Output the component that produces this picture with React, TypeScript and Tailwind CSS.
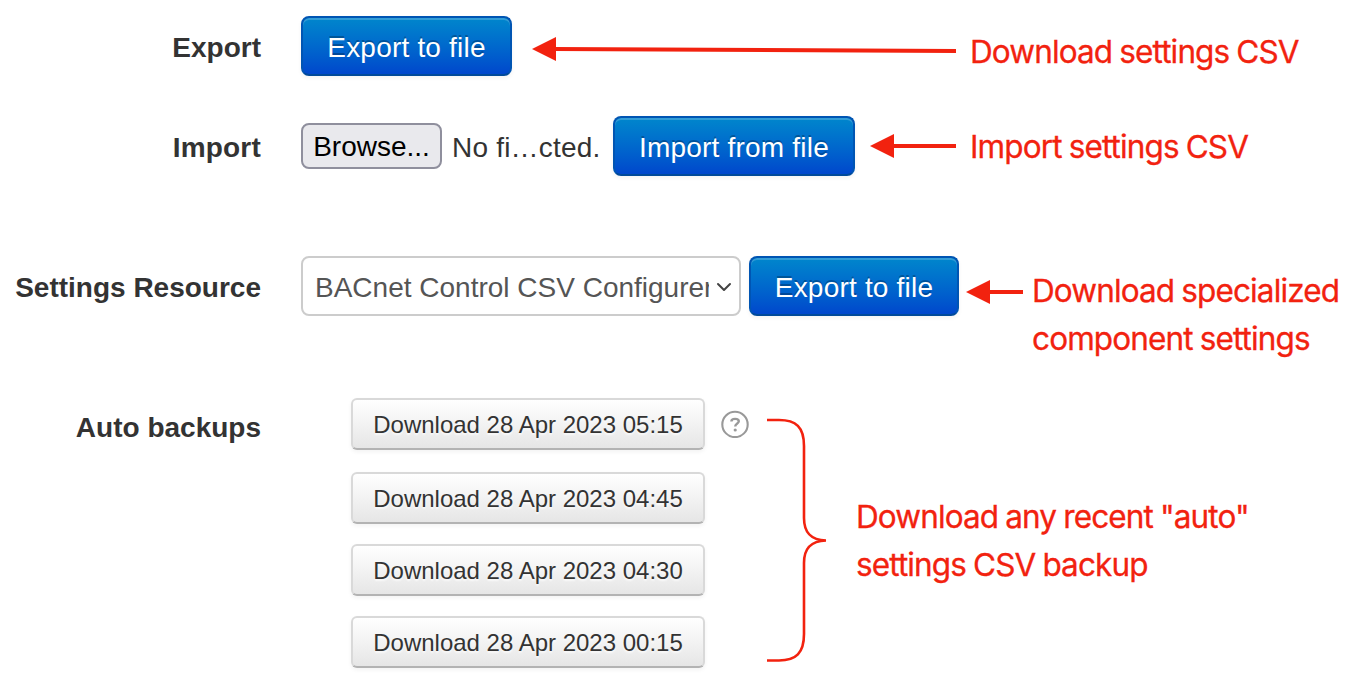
import type { ReactNode } from "react";

function Label({ children, className }: { children: ReactNode; className: string }) {
  return (
    <div className={`w-[261px] shrink-0 whitespace-nowrap text-right text-[28px] font-bold leading-[60px] text-[#333] ${className}`}>
      {children}
    </div>
  );
}

function PrimaryButton({ children, className }: { children: ReactNode; className: string }) {
  return (
    <button
      className={`h-[60px] shrink-0 whitespace-nowrap rounded-[8px] border-2 border-[#0055b3] border-b-[#004a9a] bg-linear-to-b from-[#0088cc] to-[#0044cc] bg-origin-border pt-[3px] text-center text-[28px] leading-[53px] text-white shadow-[inset_0_2px_0_rgba(255,255,255,0.2),0_2px_4px_rgba(0,0,0,0.05)] [text-shadow:0_-2px_0_rgba(0,0,0,0.25)] ${className}`}
    >
      {children}
    </button>
  );
}

function Arrow({ width, drop = 0, className }: { width: number; drop?: number; className: string }) {
  return (
    <svg width={width} height="26" viewBox={`0 0 ${width} 26`} className={`shrink-0 ${className}`}>
      <path d={`M22 13L${width} ${13 + drop}`} stroke="#f2220f" strokeWidth="4" />
      <path d="M0 13L24 1V25Z" fill="#f2220f" />
    </svg>
  );
}

function Note({ children, className }: { children: ReactNode; className: string }) {
  return (
    <div className={`shrink-0 whitespace-nowrap font-[Inter,sans-serif] text-[31.5px] leading-[48px] tracking-[-0.87px] text-[#f2220f] [-webkit-text-stroke:0.3px_#f2220f] [word-spacing:-1px] ${className}`}>
      {children}
    </div>
  );
}

const backups = ["28 Apr 2023 05:15", "28 Apr 2023 04:45", "28 Apr 2023 04:30", "28 Apr 2023 00:15"];

export default function App() {
  return (
    <div className="h-[688px] w-[1352px] overflow-hidden bg-white pt-4 font-['Liberation_Sans',sans-serif]">
      <div className="flex h-[60px] items-start">
        <Label className="pt-[2px]">Export</Label>
        <PrimaryButton className="ml-10 w-[211px] tracking-[0.2px]">Export to file</PrimaryButton>
        <Arrow width={424} drop={2} className="ml-5 mt-5" />
        <Note className="ml-[14px] mt-3">Download settings CSV</Note>
      </div>

      <div className="mt-10 flex h-[60px] items-start">
        <Label className="pt-[2px] tracking-[0.2px]">Import</Label>
        <button className="ml-10 mt-[7px] h-[46px] w-[141px] shrink-0 rounded-[8px] border-2 border-[#8f8f9d] bg-[#e9e9ed] pt-[2px] text-center text-[28px] leading-[40px] text-black">
          Browse...
        </button>
        <span className="ml-[10px] w-[161px] shrink-0 whitespace-nowrap text-[28px] leading-[64px] tracking-[0.2px] text-[#333]">No fi…cted.</span>
        <PrimaryButton className="w-[242px] tracking-[0.2px]">Import from file</PrimaryButton>
        <Arrow width={86} className="ml-[15px] mt-[17px]" />
        <Note className="ml-[14px] mt-[7px]">Import settings CSV</Note>
      </div>

      <div className="mt-20 flex h-[60px] items-start">
        <Label className="pt-[2px]">Settings Resource</Label>
        <div className="ml-10 flex h-[60px] w-[440px] shrink-0 items-center rounded-[8px] border-2 border-[#ccc] bg-white pl-3">
          <span className="w-[394px] overflow-hidden whitespace-nowrap pt-[3px] text-[28px] leading-[53px] text-[#555]">
            BACnet Control CSV Configurer
          </span>
          <svg width="16" height="12" viewBox="0 0 16 12" className="ml-[7px] mt-[2px] shrink-0" fill="none">
            <path d="M2 3L8 9L14 3" stroke="#444" strokeWidth="2" strokeLinecap="round" strokeLinejoin="round" />
          </svg>
        </div>
        <PrimaryButton className="ml-2 w-[210px] tracking-[0.2px]">Export to file</PrimaryButton>
        <Arrow width={57} className="ml-[7px] mt-[23px]" />
        <Note className="ml-[9px] mt-[11px]">
          Download specialized
          <br />
          component settings
        </Note>
      </div>

      <div className="mt-[82px] flex items-start">
        <Label className="">Auto backups</Label>
        <div className="ml-[90px] flex w-[354px] shrink-0 flex-col gap-5">
          {backups.map((stamp) => (
            <button
              key={stamp}
              className="h-[52px] whitespace-nowrap rounded-[6px] border-2 border-[#d9d9d9] border-b-[#b3b3b3] bg-linear-to-b from-white to-[#e6e6e6] pt-[2px] text-center text-[24px] leading-[46px] text-[#333] shadow-[0_2px_4px_rgba(0,0,0,0.05)] [text-shadow:0_2px_2px_rgba(255,255,255,0.75)] first:mb-[2px]"
            >
              Download {stamp}
            </button>
          ))}
        </div>
        <svg width="28" height="28" viewBox="0 0 28 28" className="ml-4 mt-[12px] shrink-0" fill="none" stroke="#999">
          <circle cx="14" cy="14.4" r="12.7" strokeWidth="2.1" />
          <path d="M10.4 11.4C10.4 9.5 12 8.9 14.1 8.9C16.4 8.9 17.8 9.8 17.8 11.3C17.8 13.6 14.2 13.3 14.2 16.6" strokeWidth="2.4" />
          <circle cx="14.2" cy="20" r="1.6" fill="#999" stroke="none" />
        </svg>
        <svg width="60" height="246" viewBox="0 0 60 246" className="ml-[18px] mt-[19px] shrink-0" fill="none" stroke="#f2220f" strokeWidth="2.6">
          <path d="M0 3H12C29 3 37 10 37 29V101C37 116 44 123 59 123.5C44 124 37 131 37 146V217C37 236 29 243.5 12 243.5H0" />
        </svg>
        <Note className="ml-[29px] mt-[95px]">
          Download any recent "auto"
          <br />
          settings CSV backup
        </Note>
      </div>
    </div>
  );
}
